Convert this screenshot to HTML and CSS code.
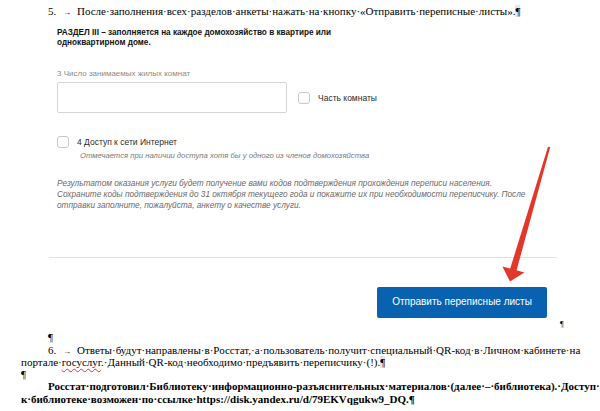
FILE: index.html
```html
<!DOCTYPE html>
<html lang="ru">
<head>
    <meta charset="UTF-8">
    <title>Перепись — инструкция</title>
    <link rel="stylesheet" href="styles.css">
</head>
<body>
    <div class="page">
        <div class="line indent"><span class="num">5.</span><span class="tab">→</span>После·заполнения·всех·разделов·анкеты·нажать·на·кнопку·«Отправить·переписные·листы».<span class="mark">¶</span></div>

        <div class="pic-para">
            <div class="shot">
                <div class="heading">РАЗДЕЛ III – заполняется на каждое домохозяйство в квартире или<br>одноквартирном доме.</div>

                <div class="field-label">3 Число занимаемых жилых комнат</div>
                <div class="field-row">
                    <div class="input"></div>
                    <div class="check"></div>
                    <span class="check-label">Часть комнаты</span>
                </div>

                <div class="internet-row">
                    <div class="check"></div>
                    <span class="check-label">4 Доступ к сети Интернет</span>
                </div>
                <div class="hint">Отмечается при наличии доступа хотя бы у одного из членов домохозяйства</div>

                <div class="result">Результатом оказания услуги будет получение вами кодов подтверждения прохождения переписи населения.<br>Сохраните коды подтверждения до 31 октября текущего года и покажите их при необходимости переписчику. После<br>отправки заполните, пожалуйста, анкету о качестве услуги.</div>

                <div class="separator"></div>
                <div class="send-btn">Отправить переписные листы</div>

                <svg class="arrow" width="509" height="312" viewBox="0 0 509 312">
                    <g transform="translate(-48,-18)">
                        <polygon points="548,146.7 550.2,147.3 516.6,270.2 524.4,272.5 510,281.5 502.4,266.4 510.2,268.6" fill="#e2372b"/>
                    </g>
                </svg>
            </div>
            <span class="pic-mark">¶</span>
        </div>

        <div class="line indent">¶</div>
        <div class="line indent spread">
            <span><span class="num">6.</span><span class="tab">→</span>Ответы·</span>
            <span>будут·</span><span>направлены·</span><span>в·</span><span>Росстат,·</span><span>а·</span><span>пользователь·</span><span>получит·</span><span>специальный·</span><span>QR-код·</span><span>в·</span><span>Личном·</span><span>кабинете·</span><span>на</span>
        </div>
        <div class="line">портале·<span class="spell">госуслуг</span>.·Данный·QR-код·необходимо·предъявить·переписчику·(!).<span class="mark">¶</span></div>
        <div class="line">¶</div>
        <div class="line indent spread bold wide">
            <span>Росстат·подготовил·</span><span>Библиотеку·информационно-разъяснительных·</span><span>материалов·(далее·</span><span>–·</span><span>библиотека).·</span><span>Доступ·</span>
        </div>
        <div class="line bold">к·библиотеке·возможен·по·ссылке·https://disk.yandex.ru/d/79EKVqgukw9_DQ.¶</div>
    </div>
</body>
</html>
```

FILE: styles.css
```css
/* Word page */
body {
    margin: 0;
    background: #ffffff;
    font-family: "Liberation Serif", "Times New Roman", serif;
    font-size: 11px;
    line-height: 12.3px;
    color: #000000;
}

.page {
    padding: 5px 24px 0 21px;
}

.line {
    height: 12.3px;
    white-space: nowrap;
}

.indent {
    padding-left: 27px;
}

.spread {
    display: flex;
    justify-content: space-between;
}

.wide {
    margin-right: -5px;
}

.bold {
    font-weight: bold;
}

.num {
    display: inline-block;
    width: 15px;
}

.tab {
    display: inline-block;
    width: 14px;
    font-size: 8px;
    line-height: 8px;
}

.mark {
    background: #e6e6e6;
}

.spell {
    text-decoration: underline wavy #e0332b;
    text-decoration-thickness: 1px;
    text-underline-offset: 2px;
}

/* pasted screenshot */
.pic-para {
    display: flex;
    align-items: flex-end;
    padding: 1px 0 1px 27px;
}

.pic-mark {
    margin-left: 3px;
    font-size: 8px;
    line-height: 10px;
}

.shot {
    position: relative;
    width: 509px;
    height: 312px;
    box-sizing: border-box;
    padding: 10px 0 0 9px;
    display: flex;
    flex-direction: column;
    font-family: "Liberation Sans", Arial, sans-serif;
    color: #333333;
}

.heading {
    font-weight: bold;
    font-size: 8.2px;
    line-height: 9.5px;
    color: #111111;
}

.field-label {
    margin-top: 22px;
    font-size: 8px;
    line-height: 10px;
    color: #8a8a8a;
}

.field-row {
    display: flex;
    align-items: center;
    margin-top: 3px;
}

.input {
    width: 230px;
    height: 31px;
    box-sizing: border-box;
    border: 1px solid #d6d6d6;
    border-radius: 2px;
}

.check {
    width: 12px;
    height: 12px;
    box-sizing: border-box;
    border: 1px solid #c9c9c9;
    border-radius: 3px;
}

.field-row .check {
    margin-left: 11px;
}

.check-label {
    margin-left: 8px;
    font-size: 8.5px;
    color: #2a2a2a;
}

.internet-row {
    display: flex;
    align-items: center;
    margin-top: 23px;
}

.hint {
    margin: 2px 0 0 23px;
    font-size: 7.7px;
    line-height: 10px;
    font-style: italic;
    color: #777777;
}

.result {
    margin-top: 17px;
    font-size: 8.25px;
    line-height: 11px;
    font-style: italic;
    color: #6a6a6a;
    white-space: nowrap;
}

.separator {
    margin: 46px 0 0 -8px;
    height: 1px;
    background: #e2e2e2;
}

.send-btn {
    align-self: flex-start;
    margin: 29px 0 0 320px;
    width: 170px;
    height: 31px;
    display: flex;
    align-items: center;
    justify-content: center;
    background: #0962af;
    border-radius: 2px;
    color: #ffffff;
    font-size: 10px;
}

.arrow {
    position: absolute;
    top: 0;
    left: 0;
}
```
